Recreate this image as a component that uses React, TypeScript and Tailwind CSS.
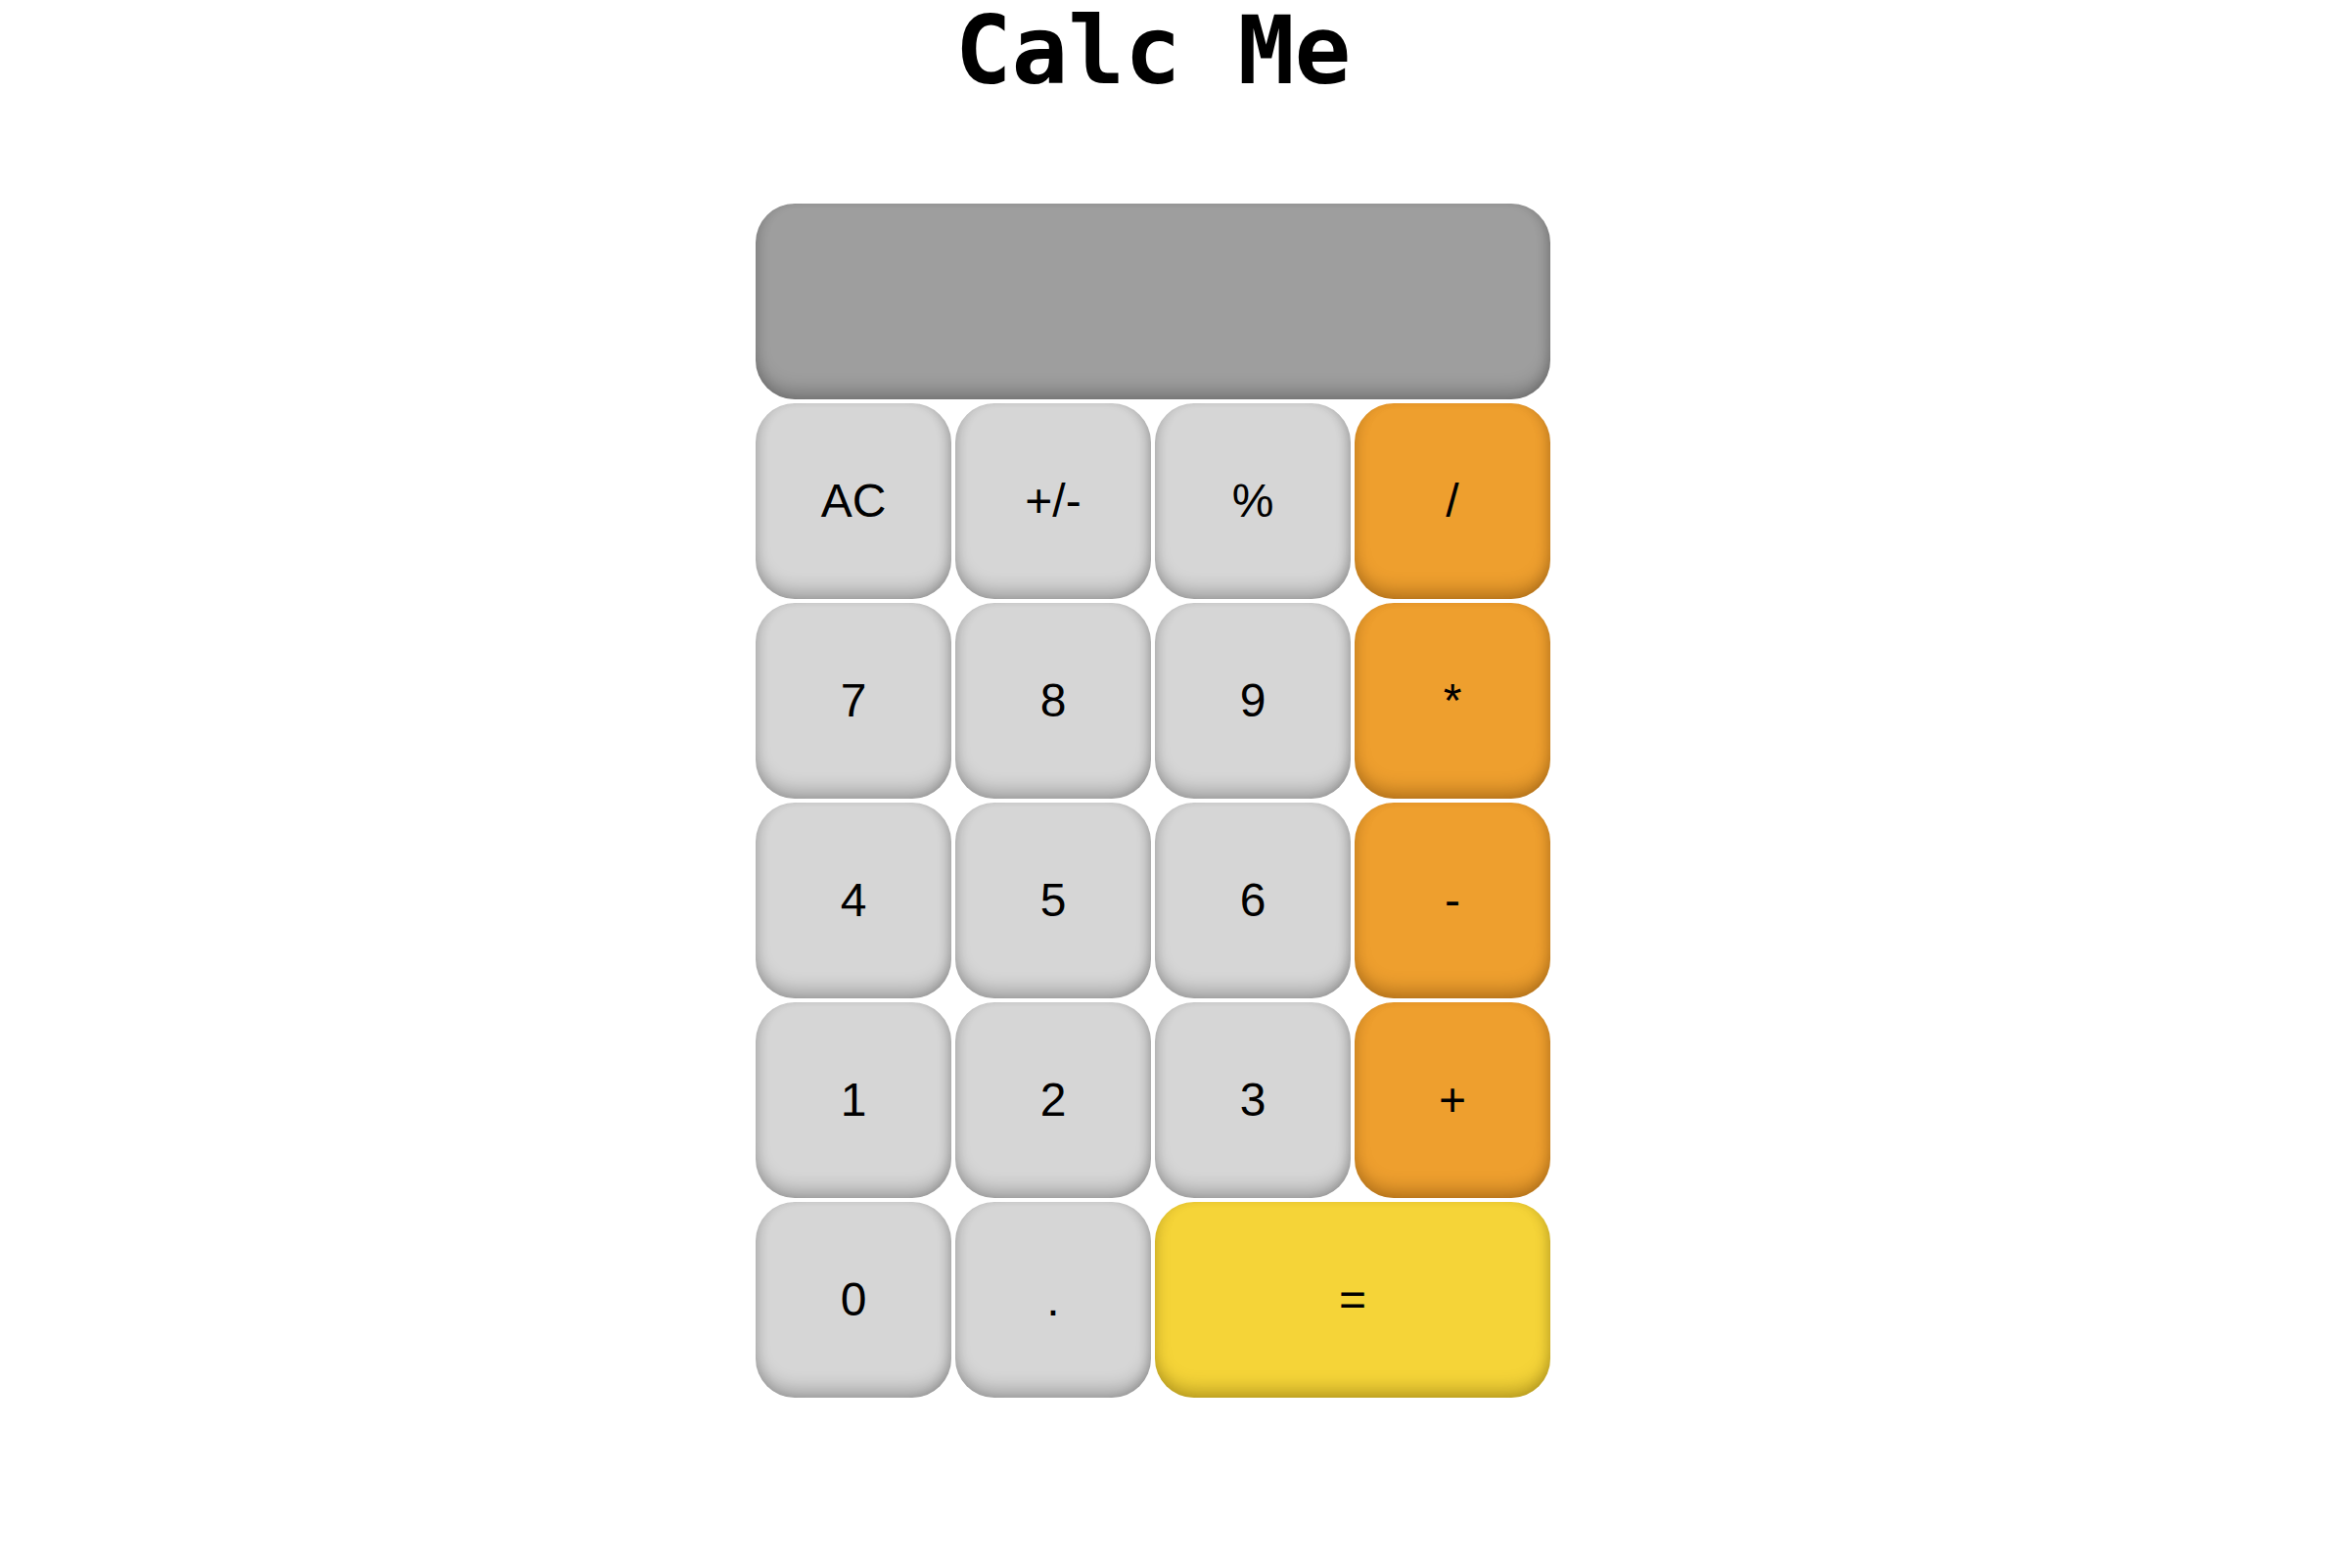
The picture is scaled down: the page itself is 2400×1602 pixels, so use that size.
const keys: { label: string; kind: 'gray' | 'orange' | 'yellow' }[] = [
  { label: 'AC', kind: 'gray' },
  { label: '+/-', kind: 'gray' },
  { label: '%', kind: 'gray' },
  { label: '/', kind: 'orange' },
  { label: '7', kind: 'gray' },
  { label: '8', kind: 'gray' },
  { label: '9', kind: 'gray' },
  { label: '*', kind: 'orange' },
  { label: '4', kind: 'gray' },
  { label: '5', kind: 'gray' },
  { label: '6', kind: 'gray' },
  { label: '-', kind: 'orange' },
  { label: '1', kind: 'gray' },
  { label: '2', kind: 'gray' },
  { label: '3', kind: 'gray' },
  { label: '+', kind: 'orange' },
  { label: '0', kind: 'gray' },
  { label: '.', kind: 'gray' },
  { label: '=', kind: 'yellow' },
];

const keyColors = {
  gray: 'bg-[#d6d6d6] shadow-[inset_0_-12px_18px_-4px_rgba(0,0,0,0.25),inset_8px_0_12px_-6px_rgba(0,0,0,0.12),inset_-8px_0_12px_-6px_rgba(0,0,0,0.2)]',
  orange: 'bg-[#ee9f2e] shadow-[inset_0_-12px_18px_-4px_rgba(100,55,0,0.4),inset_8px_0_12px_-6px_rgba(100,55,0,0.12),inset_-8px_0_12px_-6px_rgba(100,55,0,0.22)]',
  yellow: 'col-span-2 bg-[#f5d438] shadow-[inset_0_-12px_18px_-4px_rgba(100,80,0,0.4),inset_8px_0_12px_-6px_rgba(100,80,0,0.14),inset_-8px_0_12px_-6px_rgba(100,80,0,0.22)]',
};

export default function App() {
  return (
    <div className="min-h-screen bg-white pr-[44px] flex flex-col items-center">
      <h1 className="font-['DejaVu_Sans_Mono',monospace] font-bold text-[96px] leading-[112px] text-black mt-[-4px]">
        Calc Me
      </h1>

      <div className="mt-[100px] grid grid-cols-[repeat(4,200px)] auto-rows-[200px] gap-[4px]">
        {/* display */}
        <div className="col-span-4 rounded-[40px] bg-[#9e9e9e] shadow-[inset_0_-12px_18px_-4px_rgba(0,0,0,0.25),inset_8px_0_12px_-6px_rgba(0,0,0,0.12),inset_-8px_0_12px_-6px_rgba(0,0,0,0.18)]" />

        {keys.map((k) => (
          <button
            key={k.label}
            className={`rounded-[40px] flex items-center justify-center text-black text-[48px] font-['Liberation_Sans',Arial,sans-serif] ${keyColors[k.kind]}`}
          >
            {k.label}
          </button>
        ))}
      </div>
    </div>
  );
}
